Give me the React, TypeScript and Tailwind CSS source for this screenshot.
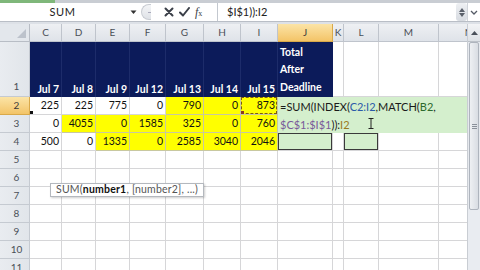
import React from "react";

const colDefs = [
  { k: "C", w: 32 },
  { k: "D", w: 34 },
  { k: "E", w: 34 },
  { k: "F", w: 36 },
  { k: "G", w: 38 },
  { k: "H", w: 37 },
  { k: "I", w: 37 },
  { k: "J", w: 55 },
  { k: "K", w: 11 },
  { k: "L", w: 35 },
  { k: "M", w: 60 },
  { k: "N", w: 60 },
];

type C = { v?: string; y?: boolean; ants?: boolean; handle?: string; box?: boolean };

const data: Record<number, (C | null)[]> = {
  2: [
    { v: "225", handle: "#111" },
    { v: "225" },
    { v: "775" },
    { v: "0" },
    { v: "790", y: true },
    { v: "0", y: true },
    { v: "873", y: true, ants: true, handle: "#8a3a20" },
    null, null, null, null, null,
  ],
  3: [
    { v: "0" },
    { v: "4055", y: true },
    { v: "0", y: true },
    { v: "1585", y: true },
    { v: "325", y: true },
    { v: "0", y: true },
    { v: "760", y: true },
    null, null, null, null, null,
  ],
  4: [
    { v: "500" },
    { v: "0" },
    { v: "1335", y: true },
    { v: "0", y: true },
    { v: "2585", y: true },
    { v: "3040", y: true },
    { v: "2046", y: true },
    { box: true },
    {},
    { box: true },
    {},
    {},
  ],
};

const font = { fontFamily: "Lato, 'Open Sans', sans-serif" };

function FormulaBar() {
  return (
    <div className="h-[24px] w-full bg-[#dde1e7] flex flex-col">
      <div className="h-[3px] flex">
        <div className="w-[55px] bg-[#7fb77a]" />
        <div className="flex-1 bg-[#c9cdd3]" />
      </div>
      <div className="h-[19px] bg-white flex items-center border-b border-[#b9bec6]">
        <div className="w-[138px] ml-[3px] h-full flex items-center relative">
          <span className="flex-1 text-center text-[11px] text-[#222] tracking-[0.5px] pr-[8px]">SUM</span>
          <svg width="7" height="5" className="mr-[4px]" viewBox="0 0 7 5">
            <path d="M0.5 0.5 L6.5 0.5 L3.5 4 Z" fill="#333" />
          </svg>
        </div>
        <div className="w-[10px] h-[16px] rounded-l-full border border-r-0 border-[#c8ccd2] bg-gradient-to-b from-[#f4f5f7] to-[#dfe2e7] flex items-center justify-end">
          <div className="w-[3px] h-[1px] bg-[#aab]" />
        </div>
        <div className="w-[66px] h-full flex items-center">
          <svg width="10" height="10" viewBox="0 0 10 10" className="ml-[13px]">
            <path d="M1.5 1.5 L8.5 8.5 M8.5 1.5 L1.5 8.5" stroke="#3a3f48" strokeWidth="2" strokeLinecap="round" />
          </svg>
          <svg width="11" height="10" viewBox="0 0 11 10" className="ml-[5px]">
            <path d="M1 5.5 L4 8.5 L10 1" stroke="#3a3f48" strokeWidth="2" fill="none" strokeLinecap="round" strokeLinejoin="round" />
          </svg>
          <span className="ml-[5px] text-[12px] italic text-[#3a3f48] leading-none" style={{ fontFamily: "'Liberation Serif', serif" }}>
            f<span className="text-[8px] not-italic">x</span>
          </span>
        </div>
        <div className="flex-1 h-full border-l border-[#c3c8cf] flex items-center pl-[9px] text-[11px] text-[#222]">
          $I$1)):I2
        </div>
        <div className="w-[11px] h-full flex flex-col items-center justify-center gap-[1px] bg-gradient-to-b from-[#eef0f3] to-[#d7dbe1] rounded-[3px]">
          <svg width="6" height="4" viewBox="0 0 6 4"><path d="M0 4 L3 0 L6 4 Z" fill="#5a606a" /></svg>
          <svg width="6" height="4" viewBox="0 0 6 4"><path d="M0 0 L3 4 L6 0 Z" fill="#5a606a" /></svg>
        </div>
        <div className="w-[13px] h-full flex items-center justify-center border-l border-[#d0d4da]">
          <svg width="8" height="5" viewBox="0 0 8 5"><path d="M1 1 L4 4 L7 1" stroke="#555b66" strokeWidth="1.3" fill="none" /></svg>
        </div>
      </div>
    </div>
  );
}

function Grid() {
  const template = "30px " + colDefs.map((c) => c.w + "px").join(" ");
  const rows = "18px 55px repeat(10, 18px)";
  const cells: React.ReactNode[] = [];

  cells.push(
    <div key="corner" className="bg-[#e3e7ec] border-r border-b border-[#b8bdc5] flex items-end justify-end pr-[3px] pb-[3px]">
      <svg width="9" height="9" viewBox="0 0 9 9"><path d="M9 0 L9 9 L0 9 Z" fill="#bcc2cb" /></svg>
    </div>
  );
  colDefs.forEach((c) => {
    const hi = c.k === "J";
    cells.push(
      <div
        key={"h" + c.k}
        className={
          "flex items-center justify-center text-[10px] border-r border-b overflow-hidden " +
          (hi
            ? "bg-gradient-to-b from-[#fbe4a6] to-[#f3c467] border-[#d9a94a] text-[#3a3a3a]"
            : "bg-gradient-to-b from-[#eef0f3] to-[#dfe3e9] border-[#bfc4cc] text-[#4a4f57]")
        }
      >
        {c.k}
      </div>
    );
  });

  for (let r = 1; r <= 11; r++) {
    const hi = r === 2;
    cells.push(
      <div
        key={"r" + r}
        className={
          "flex justify-center text-[10px] border-r border-b pl-[4px] " +
          (r === 1 ? "items-end pb-[2px] " : "items-center ") +
          (hi
            ? "bg-gradient-to-b from-[#fbe4a6] to-[#f3c467] border-[#d9a94a] text-[#3a3a3a]"
            : "bg-gradient-to-r from-[#e9ecf0] to-[#e1e5ea] border-[#c5cad1] text-[#4a4f57]")
        }
      >
        {r}
      </div>
    );
    if (r === 1) {
      const labels = ["Jul 7", "Jul 8", "Jul 9", "Jul 12", "Jul 13", "Jul 14", "Jul 15"];
      labels.forEach((l, i) => {
        cells.push(
          <div key={"n" + i} className="bg-[#0c1b5a] border-r border-[#1d2c6a] flex items-end justify-end pr-[2px] pb-[1px] text-white font-bold text-[10.5px] leading-[14px] whitespace-nowrap overflow-hidden">
            {l}
          </div>
        );
      });
      cells.push(
        <div key="nJ" className="bg-[#0c1b5a] flex flex-col justify-end pl-[2px] pb-[1px] text-white font-bold text-[10.5px] leading-[17.5px] overflow-hidden">
          <span>Total</span>
          <span>After</span>
          <span>Deadline</span>
        </div>
      );
      for (let j = 8; j < colDefs.length; j++) {
        cells.push(<div key={"e1" + j} className="border-r border-b border-[#d6d6d8] bg-white" />);
      }
      continue;
    }
    const rowData = data[r];
    colDefs.forEach((c, j) => {
      if ((r === 2 || r === 3) && j >= 7) {
        if (r === 2 && j === 7) {
          cells.push(
            <div
              key="editor"
              className="col-start-9 col-span-5 row-start-3 row-span-2 bg-[#d4efcd] relative pl-[2px] pt-[1px] text-[11px] leading-[18px] text-[#1a1a1a] whitespace-nowrap"
            >
              <div>
                =SUM(INDEX(<span className="text-[#2c5aa8]">C2:I2</span>,MATCH(<span className="text-[#2d6a2d]">B2</span>,
              </div>
              <div>
                <span className="text-[#7a5a9a]">$C$1:$I$1</span>)):<span className="text-[#9a7a20]">I2</span>
              </div>
              <svg width="6" height="11" viewBox="0 0 6 11" className="absolute left-[90px] top-[21px]">
                <path d="M0.5 0.5 H5.5 M3 0.5 V10.5 M0.5 10.5 H5.5" stroke="#222" strokeWidth="1" fill="none" />
              </svg>
            </div>
          );
        }
        return;
      }
      const cell = rowData ? rowData[j] : null;
      const base = "relative flex items-center justify-end pr-[2px] text-[10.5px] text-[#111] border-r border-b whitespace-nowrap overflow-hidden ";
      if (!cell) {
        cells.push(<div key={r + c.k} className={base + "bg-white border-[#d6d6d8]"} />);
        return;
      }
      if (cell.box) {
        cells.push(
          <div key={r + c.k} className="border-r border-b border-[#d6d6d8] bg-white flex">
            <div className="flex-1 bg-[#d4efcd] border border-[#3a3a3a]" />
          </div>
        );
        return;
      }
      cells.push(
        <div
          key={r + c.k}
          className={base + (cell.y ? "bg-[#ffff00] border-[#c8c8a0]" : "bg-white border-[#d6d6d8]")}
        >
          {cell.ants && (
            <div className="absolute inset-0 border border-dashed border-[#7a5a10]" />
          )}
          {cell.handle && (
            <div className="absolute left-0 bottom-0 w-[3px] h-[3px]" style={{ backgroundColor: cell.handle }} />
          )}
          {cell.v}
        </div>
      );
    });
  }

  return (
    <div className="flex-1 overflow-hidden relative">
      <div className="grid" style={{ gridTemplateColumns: template, gridTemplateRows: rows }}>
        {cells}
      </div>
      <div className="absolute left-[50px] top-[159px] h-[14px] flex items-center px-[5px] bg-white border border-[#b4b8be] shadow-[1px_1px_2px_rgba(0,0,0,0.2)] text-[10.5px] tracking-[0.2px] text-[#555] whitespace-nowrap">
        SUM(<span className="font-bold text-[#111]">number1</span>, [number2], ...)
      </div>
    </div>
  );
}

function Scrollbar() {
  return (
    <div className="w-[13px] flex flex-col bg-[#e6e9ee] border-l border-[#c9cdd3]">
      <div className="h-[18px] flex items-center justify-center bg-gradient-to-b from-[#f3f4f6] to-[#dde1e6] border-b border-[#bcc1c8]">
        <svg width="7" height="4" viewBox="0 0 7 4"><path d="M0 4 L3.5 0 L7 4 Z" fill="#4a505a" /></svg>
      </div>
      <div className="h-[168px] mx-[1px] bg-gradient-to-r from-[#eef0f3] to-[#d9dde3] border border-[#aeb4bd] rounded-[2px] flex items-center justify-center">
        <div className="flex flex-col gap-[1px]">
          <div className="w-[5px] h-[1px] bg-[#8a909a]" />
          <div className="w-[5px] h-[1px] bg-[#8a909a]" />
          <div className="w-[5px] h-[1px] bg-[#8a909a]" />
        </div>
      </div>
      <div className="flex-1 bg-[#e9ecf1]" />
    </div>
  );
}

export default function App() {
  return (
    <div className="w-[480px] h-[270px] overflow-hidden bg-white flex flex-col" style={font}>
      <FormulaBar />
      <div className="flex-1 flex overflow-hidden">
        <Grid />
        <Scrollbar />
      </div>
    </div>
  );
}
